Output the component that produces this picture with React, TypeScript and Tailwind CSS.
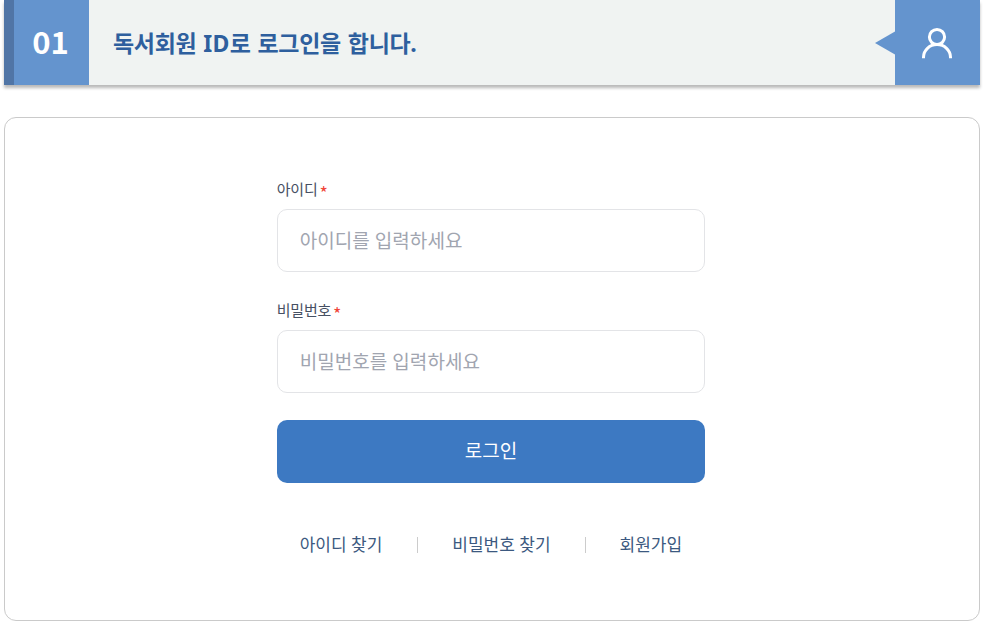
import React from "react";

function Field({ label, hint, type, name }: { label: string; hint: string; type: string; name: string }) {
  return (
    <div className="flex flex-col">
      <label htmlFor={name} className="flex h-[20px] items-center whitespace-nowrap text-[15px] tracking-[-0.2px] text-[#465063]">
        {label}
        <span className="ml-[2px] mt-[5px] font-['Noto_Sans_CJK_KR',sans-serif] text-[18px] leading-5 text-[#f04438]">*</span>
      </label>
      <input
        id={name}
        type={type}
        placeholder={hint}
        className="mt-[10px] h-[63px] w-full rounded-[10px] border border-[#e3e4e7] bg-white px-[22px] text-[19px] tracking-[0.05px] outline-none placeholder:text-[#a1a5b0]"
      />
    </div>
  );
}

export default function App() {
  return (
    <div className="h-[621px] w-[984px] overflow-hidden bg-white px-1 font-['Noto_Sans','Noto_Sans_CJK_KR',sans-serif]">
      <header className="flex h-[85px] bg-[#f0f3f2] shadow-[0_3px_3px_rgba(0,0,0,0.28)]">
        <div className="flex w-[85px] items-center justify-center border-l-[10px] border-[#5075a6] bg-[#6494ce] pb-[3px] pr-[2px] font-['Noto_Sans_CJK_KR',sans-serif] text-[31px] font-bold text-white">01</div>
        <h1 className="flex flex-1 items-center pl-6 pt-[2px] text-[23px] font-bold tracking-[-0.3px] [word-spacing:1.2px] text-[#2e5f9e]"><span>독서회원 <span className="tracking-[0.3px]">ID</span>로 로그인을 합니다.</span></h1>
        <svg className="h-[85px] w-5" viewBox="0 0 20 85"><path d="M20 31.5v23L0 43z" fill="#6494ce" /></svg>
        <div className="flex w-[85px] items-center justify-center bg-[#6494ce]">
          <svg className="mr-[2px]" width="34" height="34" viewBox="0 0 34 34" fill="none" stroke="white" strokeWidth="3" strokeLinecap="butt">
            <circle cx="17" cy="11" r="7.6" /><path d="M3.5 32.3v-1a13.5 12.7 0 0 1 27 0v1" />
          </svg>
        </div>
      </header>
      <main className="mt-8 flex h-[504px] justify-center rounded-[12px] border border-[#cacaca] pr-[2px] pt-[61px]">
        <form className="flex w-[428.6px] flex-col">
          <Field label="아이디" hint="아이디를 입력하세요" type="text" name="id" />
          <div className="mt-7"><Field label="비밀번호" hint="비밀번호를 입력하세요" type="password" name="pw" /></div>
          <button type="button" className="mt-[27px] h-[63px] rounded-[10px] bg-[#3d79c2] text-[19px] text-white">로그인</button>
          <nav className="mt-[48px] flex h-7 items-center whitespace-nowrap pl-[23px] text-[17px] text-[#3c5980]">
            <a>아이디 찾기</a><span className="ml-[35px] mr-[34px] h-4 w-px bg-[#ccc]" />
            <a>비밀번호 찾기</a><span className="mx-[34px] h-4 w-px bg-[#ccc]" />
            <a>회원가입</a>
          </nav>
        </form>
      </main>
    </div>
  );
}
